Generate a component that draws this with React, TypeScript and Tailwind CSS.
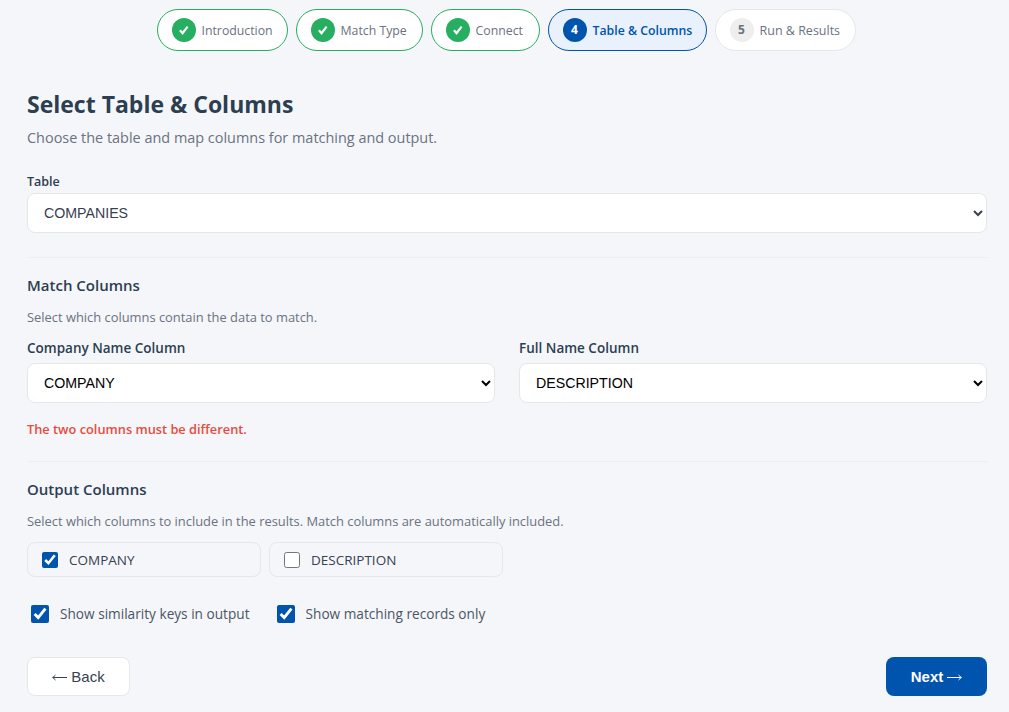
const doneSteps = [
    { label: 'Introduction', width: 'w-[131px]' },
    { label: 'Match Type', width: 'w-[127px]' },
    { label: 'Connect', width: 'w-[109px]' },
];

function DoneStep({ label, width }: { label: string; width: string }) {
    return (
        <div className={`flex h-[42px] items-center gap-[6px] rounded-[21px] border border-[#27ae60] bg-white px-[14px] ${width}`}>
            <span className="flex h-6 w-6 shrink-0 items-center justify-center rounded-full bg-[#27ae60] text-white">
                <svg width="11" height="11" viewBox="0 0 10 10" fill="currentColor">
                    <path d="M1 5.5 L2.6 4.2 L4 6 L8 0.8 L9.5 2 L4.2 9.2 Z" />
                </svg>
            </span>
            <span className="pt-[3px] text-[12.3px] text-[#6b7280]">{label}</span>
        </div>
    );
}

function OutputOption({ label, checked }: { label: string; checked: boolean }) {
    return (
        <label className="flex h-[35px] w-[234px] items-center gap-[11px] rounded-lg border border-[#e5e7eb] bg-[#f4f6fa] px-[14px] text-[13.5px] text-[#374151]">
            <input type="checkbox" readOnly checked={checked} className="h-4 w-4 accent-[#0054ae]" />
            <span className="pt-[1px]">{label}</span>
        </label>
    );
}

function ToggleOption({ label }: { label: string }) {
    return (
        <label className="flex items-center gap-[11px] text-[13.65px] text-[#4b5563]">
            <input type="checkbox" readOnly checked className="h-[18px] w-[18px] accent-[#0054ae]" />
            {label}
        </label>
    );
}

const selectClass = "h-10 w-full rounded-lg border border-[#e5e7eb] bg-white px-3 font-['Liberation_Sans',sans-serif] text-[14.2px]";

export default function App() {
    return (
        <div className="min-h-[712px] bg-[#f4f6fa] pt-[9px] pr-[22px] pl-[27px] font-['Open_Sans',sans-serif] text-[#2c3e50]">
            {/* Stepper */}
            <div className="flex justify-center gap-2 pr-[2px]">
                {doneSteps.map(step => (
                    <DoneStep key={step.label} label={step.label} width={step.width} />
                ))}
                <div className="flex h-[42px] w-[159px] items-center gap-[6px] rounded-[21px] border border-[#0054ae] bg-[#e8f1fc] px-[14px]">
                    <span className="flex h-6 w-6 shrink-0 items-center justify-center rounded-full bg-[#0054ae] text-[12px] font-bold text-white">4</span>
                    <span className="pt-[3px] text-[12.3px] font-semibold whitespace-nowrap text-[#0054ae]">Table &amp; Columns</span>
                </div>
                <div className="flex h-[42px] w-[141px] items-center gap-[6px] rounded-[21px] border border-[#e5e7eb] bg-white px-[14px]">
                    <span className="flex h-6 w-6 shrink-0 items-center justify-center rounded-full bg-[#eeeeee] text-[12px] font-bold text-[#6b7280]">5</span>
                    <span className="pt-[3px] text-[12.5px] whitespace-nowrap text-[#6b7280]">Run &amp; Results</span>
                </div>
            </div>

            <h1 className="mt-[37px] text-[23px] leading-[32px] font-bold">Select Table &amp; Columns</h1>
            <p className="mt-[8px] text-[14.45px] leading-5 text-[#6b7280]">Choose the table and map columns for matching and output.</p>

            <label className="mt-[25px] block text-[12.5px] leading-[18px] font-semibold">Table</label>
            <select className={`${selectClass} mt-[2px] text-[#374151]`} defaultValue="COMPANIES">
                <option>COMPANIES</option>
            </select>

            <hr className="mt-6 border-[#eceef2]" />

            {/* Match columns */}
            <h2 className="mt-[16px] text-[15px] leading-[22px] font-semibold">Match Columns</h2>
            <p className="mt-[12px] text-[12.9px] leading-[18px] text-[#6b7280]">Select which columns contain the data to match.</p>
            <div className="mt-[13px] grid grid-cols-2 gap-6">
                <div>
                    <label className="block text-[13.5px] leading-[18px] font-semibold">Company Name Column</label>
                    <select className={`${selectClass} mt-[6px] text-black`} defaultValue="COMPANY">
                        <option>COMPANY</option>
                    </select>
                </div>
                <div>
                    <label className="block text-[13.5px] leading-[18px] font-semibold">Full Name Column</label>
                    <select className={`${selectClass} mt-[6px] text-black`} defaultValue="DESCRIPTION">
                        <option>DESCRIPTION</option>
                    </select>
                </div>
            </div>
            <p className="mt-[17px] text-[12.8px] leading-[18px] font-semibold text-[#e74c3c]">The two columns must be different.</p>

            <hr className="mt-[23px] border-[#eceef2]" />

            {/* Output columns */}
            <h2 className="mt-[16px] text-[15px] leading-[22px] font-semibold">Output Columns</h2>
            <p className="mt-[12px] text-[12.9px] leading-[18px] text-[#6b7280]">Select which columns to include in the results. Match columns are automatically included.</p>
            <div className="mt-[12px] flex gap-2">
                <OutputOption label="COMPANY" checked />
                <OutputOption label="DESCRIPTION" checked={false} />
            </div>
            <div className="mt-[27px] flex gap-[27px] pl-1">
                <ToggleOption label="Show similarity keys in output" />
                <ToggleOption label="Show matching records only" />
            </div>

            {/* Footer */}
            <div className="mt-[33px] flex justify-between font-['Liberation_Sans',sans-serif] text-[15px]">
                <button className="flex h-[39px] w-[103px] items-center justify-center gap-[4px] rounded-lg border border-[#e5e7eb] bg-white text-[#374151]">
                    <svg width="15" height="7" viewBox="0 0 15 7" fill="none" stroke="currentColor" strokeWidth="1" className="mt-[2px]">
                        <path d="M0.5 3.5 H15 M3.5 1 L0.8 3.5 L3.5 6" />
                    </svg>
                    Back
                </button>
                <button className="flex h-[39px] w-[101px] items-center justify-center gap-[4px] rounded-lg bg-[#0054ae] font-bold text-white">
                    Next
                    <svg width="15" height="7" viewBox="0 0 15 7" fill="none" stroke="currentColor" strokeWidth="1" className="mt-[2px]">
                        <path d="M0 3.5 H14.5 M11.5 1 L14.2 3.5 L11.5 6" />
                    </svg>
                </button>
            </div>
        </div>
    );
}
